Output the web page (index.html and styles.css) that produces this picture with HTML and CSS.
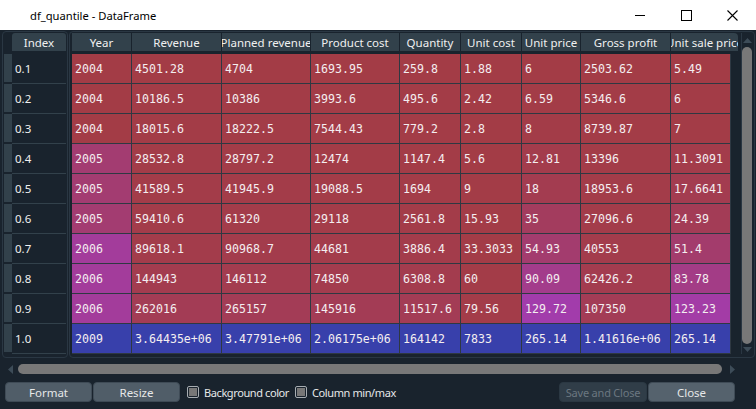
FILE: index.html
```html
<!DOCTYPE html>
<html lang="en">
<head>
<meta charset="utf-8">
<title>df_quantile - DataFrame</title>
<link rel="stylesheet" href="styles.css">
</head>
<body>
<div class="window">
  <div class="titlebar">
    <span class="title">df_quantile - DataFrame</span>
    <div class="controls">
      <div class="ctl"><svg width="10" height="10" viewBox="0 0 10 10"><line x1="0" y1="5.5" x2="10" y2="5.5" stroke="#000" stroke-width="1"/></svg></div>
      <div class="ctl"><svg width="11" height="11" viewBox="0 0 11 11"><rect x="0.5" y="0.5" width="10" height="10" fill="none" stroke="#000" stroke-width="1"/></svg></div>
      <div class="ctl"><svg width="11" height="11" viewBox="0 0 11 11"><path d="M0.5 0.5 L10.5 10.5 M10.5 0.5 L0.5 10.5" stroke="#000" stroke-width="1.1" fill="none"/></svg></div>
    </div>
  </div>
  <div class="content">
    <div class="tables">
      <div class="index-frame">
        <div class="vstrip">
          <div class="corner"></div>
          <div class="vsec"></div><div class="vsec"></div><div class="vsec"></div><div class="vsec"></div><div class="vsec"></div>
          <div class="vsec"></div><div class="vsec"></div><div class="vsec"></div><div class="vsec"></div><div class="vsec"></div>
        </div>
        <div class="index-col">
          <div class="hsec index-head">Index</div>
          <div class="icell">0.1</div>
          <div class="icell">0.2</div>
          <div class="icell">0.3</div>
          <div class="icell">0.4</div>
          <div class="icell">0.5</div>
          <div class="icell">0.6</div>
          <div class="icell">0.7</div>
          <div class="icell">0.8</div>
          <div class="icell">0.9</div>
          <div class="icell">1.0</div>
        </div>
      </div>
      <div class="data-frame">
        <div class="data-area">
          <div class="header">
            <div class="hsec"><span>Year</span></div>
            <div class="hsec"><span>Revenue</span></div>
            <div class="hsec"><span>Planned revenue</span></div>
            <div class="hsec"><span>Product cost</span></div>
            <div class="hsec"><span>Quantity</span></div>
            <div class="hsec"><span>Unit cost</span></div>
            <div class="hsec"><span>Unit price</span></div>
            <div class="hsec"><span>Gross profit</span></div>
            <div class="hsec last"><span>Unit sale price</span></div>
          </div>
          <div class="grid" id="grid">
            <div class="cell">2004</div><div class="cell">4501.28</div><div class="cell">4704</div><div class="cell">1693.95</div><div class="cell">259.8</div><div class="cell">1.88</div><div class="cell">6</div><div class="cell">2503.62</div><div class="cell">5.49</div>
            <div class="cell">2004</div><div class="cell">10186.5</div><div class="cell">10386</div><div class="cell">3993.6</div><div class="cell">495.6</div><div class="cell">2.42</div><div class="cell">6.59</div><div class="cell">5346.6</div><div class="cell">6</div>
            <div class="cell">2004</div><div class="cell">18015.6</div><div class="cell">18222.5</div><div class="cell">7544.43</div><div class="cell">779.2</div><div class="cell">2.8</div><div class="cell">8</div><div class="cell">8739.87</div><div class="cell">7</div>
            <div class="cell">2005</div><div class="cell">28532.8</div><div class="cell">28797.2</div><div class="cell">12474</div><div class="cell">1147.4</div><div class="cell">5.6</div><div class="cell">12.81</div><div class="cell">13396</div><div class="cell">11.3091</div>
            <div class="cell">2005</div><div class="cell">41589.5</div><div class="cell">41945.9</div><div class="cell">19088.5</div><div class="cell">1694</div><div class="cell">9</div><div class="cell">18</div><div class="cell">18953.6</div><div class="cell">17.6641</div>
            <div class="cell">2005</div><div class="cell">59410.6</div><div class="cell">61320</div><div class="cell">29118</div><div class="cell">2561.8</div><div class="cell">15.93</div><div class="cell">35</div><div class="cell">27096.6</div><div class="cell">24.39</div>
            <div class="cell">2006</div><div class="cell">89618.1</div><div class="cell">90968.7</div><div class="cell">44681</div><div class="cell">3886.4</div><div class="cell">33.3033</div><div class="cell">54.93</div><div class="cell">40553</div><div class="cell">51.4</div>
            <div class="cell">2006</div><div class="cell">144943</div><div class="cell">146112</div><div class="cell">74850</div><div class="cell">6308.8</div><div class="cell">60</div><div class="cell">90.09</div><div class="cell">62426.2</div><div class="cell">83.78</div>
            <div class="cell">2006</div><div class="cell">262016</div><div class="cell">265157</div><div class="cell">145916</div><div class="cell">11517.6</div><div class="cell">79.56</div><div class="cell">129.72</div><div class="cell">107350</div><div class="cell">123.23</div>
            <div class="cell">2009</div><div class="cell">3.64435e+06</div><div class="cell">3.47791e+06</div><div class="cell">2.06175e+06</div><div class="cell">164142</div><div class="cell">7833</div><div class="cell">265.14</div><div class="cell">1.41616e+06</div><div class="cell">265.14</div>
          </div>
        </div>
        <div class="vscroll">
          <div class="arrow-box up"><svg width="9" height="5" viewBox="0 0 9 5"><path d="M0 5 L4.5 0 L9 5 Z" fill="#3d4c58"/></svg></div>
          <div class="vhandle"></div>
          <div class="arrow-box down"><svg width="9" height="5" viewBox="0 0 9 5"><path d="M0 0 L4.5 5 L9 0 Z" fill="#3d4c58"/></svg></div>
        </div>
      </div>
    </div>
    <div class="hscroll">
      <div class="harrow"><svg width="5" height="9" viewBox="0 0 5 9"><path d="M5 0 L0 4.5 L5 9 Z" fill="#3d4c58"/></svg></div>
      <div class="hhandle"></div>
      <div class="harrow"><svg width="5" height="9" viewBox="0 0 5 9"><path d="M0 0 L5 4.5 L0 9 Z" fill="#3d4c58"/></svg></div>
    </div>
    <div class="buttons">
      <div class="btn btn-format">Format</div>
      <div class="btn btn-resize">Resize</div>
      <label class="check first"><span class="box"><span class="fill"></span></span>Background color</label>
      <label class="check"><span class="box"><span class="fill"></span></span>Column min/max</label>
      <div class="spacer"></div>
      <div class="btn btn-save disabled">Save and Close</div>
      <div class="btn btn-close">Close</div>
    </div>
  </div>
</div>
<script src="script.js"></script>
</body>
</html>
```
FILE: styles.css
```css
* { box-sizing: border-box; }
html, body { margin: 0; padding: 0; }
body {
  width: 756px;
  height: 409px;
  overflow: hidden;
  background: #19232d;
  color: #f0f0f0;
  font-family: "Noto Sans", "Open Sans", sans-serif;
  font-size: 11.5px;
}
.window { display: flex; flex-direction: column; height: 409px; }

.titlebar {
  height: 30px;
  background: #ffffff;
  color: #000000;
  display: flex;
  align-items: center;
  padding-right: 1px;
}
.title { flex: 1; padding-left: 30px; font-size: 11.2px; padding-top: 1px; }
.controls { display: flex; height: 30px; }
.ctl { width: 46px; height: 30px; display: flex; align-items: center; justify-content: center; }

.content { flex: 1; display: flex; flex-direction: column; padding: 1px 1px 0 2px; }
.tables { display: flex; height: 327px; }

.index-frame {
  width: 66px;
  border: 1px solid #2a3743;
  border-radius: 4px;
  padding: 1px 1px 3px 1px;
  display: flex;
}
.vstrip { width: 8px; display: flex; flex-direction: column; }
.corner { height: 21px; }
.vsec { height: 30px; background: #32414b; border-bottom: 2px solid #19232d; }
.index-col { width: 54px; display: flex; flex-direction: column; }
.hsec {
  height: 18px;
  background: #32414b;
  color: #f0f0f0;
  display: flex;
  align-items: center;
  justify-content: center;
  overflow: hidden;
  white-space: nowrap;
  border-right: 1px solid #19232d;
}
.index-head { margin-bottom: 3px; border-right: none; border-radius: 3px 3px 0 0; }
.icell {
  height: 30px;
  border-bottom: 1px solid #32414b;
  display: flex;
  align-items: center;
  padding-left: 3px;
}

.data-frame {
  margin-left: 1px;
  width: 686px;
  border: 1px solid #2a3743;
  border-radius: 4px;
  padding: 1px 1px 3px 2px;
  display: flex;
}
.data-area { width: 666px; display: flex; flex-direction: column; }
.header {
  display: grid;
  grid-template-columns: 60px 90px 89px 89px 61px 61px 59px 90px 67px;
  margin-bottom: 3px;
}
.header .hsec.last { border-right: none; border-radius: 0 4px 0 0; }
.grid {
  width: 659px;
  display: grid;
  grid-template-columns: 60px 90px 89px 89px 61px 61px 59px 90px 60px;
  grid-auto-rows: 30px;
  font-family: "DejaVu Sans Mono", "Liberation Mono", monospace;
  font-size: 11.6px;
}
.cell {
  border-right: 1px solid #2e3842;
  border-bottom: 1px solid #2e3842;
  display: flex;
  align-items: center;
  padding-left: 3px;
  white-space: nowrap;
  overflow: hidden;
  color: #f4eef0;
}

.vscroll {
  width: 12px;
  margin-left: 3px;
  border-left: 1px solid #2a3743;
  display: flex;
  flex-direction: column;
}
.arrow-box { display: flex; justify-content: center; }
.arrow-box.up { height: 14px; align-items: center; padding-top: 1px; }
.arrow-box.down { height: 10px; align-items: center; }
.vhandle {
  flex: 1;
  width: 10px;
  background: #787878;
  border-radius: 5px;
}

.hscroll {
  margin-top: 5px;
  height: 12px;
  display: flex;
  align-items: center;
  padding-left: 4px;
}
.harrow { width: 8px; display: flex; justify-content: center; align-items: center; }
.hhandle {
  width: 704px;
  height: 10px;
  margin: 0 6px 0 4px;
  background: #787878;
  border-radius: 5px;
}

.buttons {
  margin-top: 7px;
  height: 20px;
  display: flex;
  align-items: center;
  padding-left: 3px;
  padding-right: 20px;
}
.btn {
  height: 20px;
  display: flex;
  align-items: center;
  justify-content: center;
  background: #505d68;
  border: 1px solid #3f4b56;
  border-radius: 4px;
  color: #e6e8e9;
}
.btn-format { width: 87px; }
.btn-resize { width: 87px; margin-left: 1px; }
.btn-save { width: 88px; font-size: 11px; letter-spacing: -0.2px; }
.btn-close { width: 87px; margin-left: 1px; background: #55626d; }
.btn.disabled { background: #303d48; border-color: #2b3843; color: #6b7780; }
.check {
  display: flex;
  align-items: center;
  margin-left: 6px;
  color: #e6e8e9;
  font-size: 11px;
  letter-spacing: -0.4px;
}
.check.first { margin-left: 7px; }
.box {
  width: 12px;
  height: 12px;
  border: 1px solid #a7adb2;
  border-radius: 2px;
  padding: 1px;
  margin-right: 5px;
  display: flex;
}
.fill { flex: 1; background: #777777; }
.spacer { flex: 1; }
```
FILE: script.js
```js
(function () {
  var cells = document.querySelectorAll('#grid .cell');
  var ncols = 9;
  var nrows = cells.length / ncols;
  function hsv(h, s, v, a) {
    var H = (h % 1) * 6;
    var i = Math.floor(H) % 6;
    var f = H - Math.floor(H);
    var p = v * (1 - s), q = v * (1 - s * f), t = v * (1 - s * (1 - f));
    var m = [[v, t, p], [q, v, p], [p, v, t], [p, q, v], [t, p, v], [v, p, q]][i];
    return 'rgba(' + Math.round(m[0] * 255) + ',' + Math.round(m[1] * 255) + ',' + Math.round(m[2] * 255) + ',' + a + ')';
  }
  for (var j = 0; j < ncols; j++) {
    var vals = [];
    for (var r = 0; r < nrows; r++) vals.push(parseFloat(cells[r * ncols + j].textContent));
    var max = Math.max.apply(null, vals), min = Math.min.apply(null, vals);
    for (var k = 0; k < nrows; k++) {
      var hue = 0.66 + 0.33 * (max - vals[k]) / (max - min);
      cells[k * ncols + j].style.backgroundColor = hsv(hue, 0.7, 1.0, 0.6);
    }
  }
})();
```
